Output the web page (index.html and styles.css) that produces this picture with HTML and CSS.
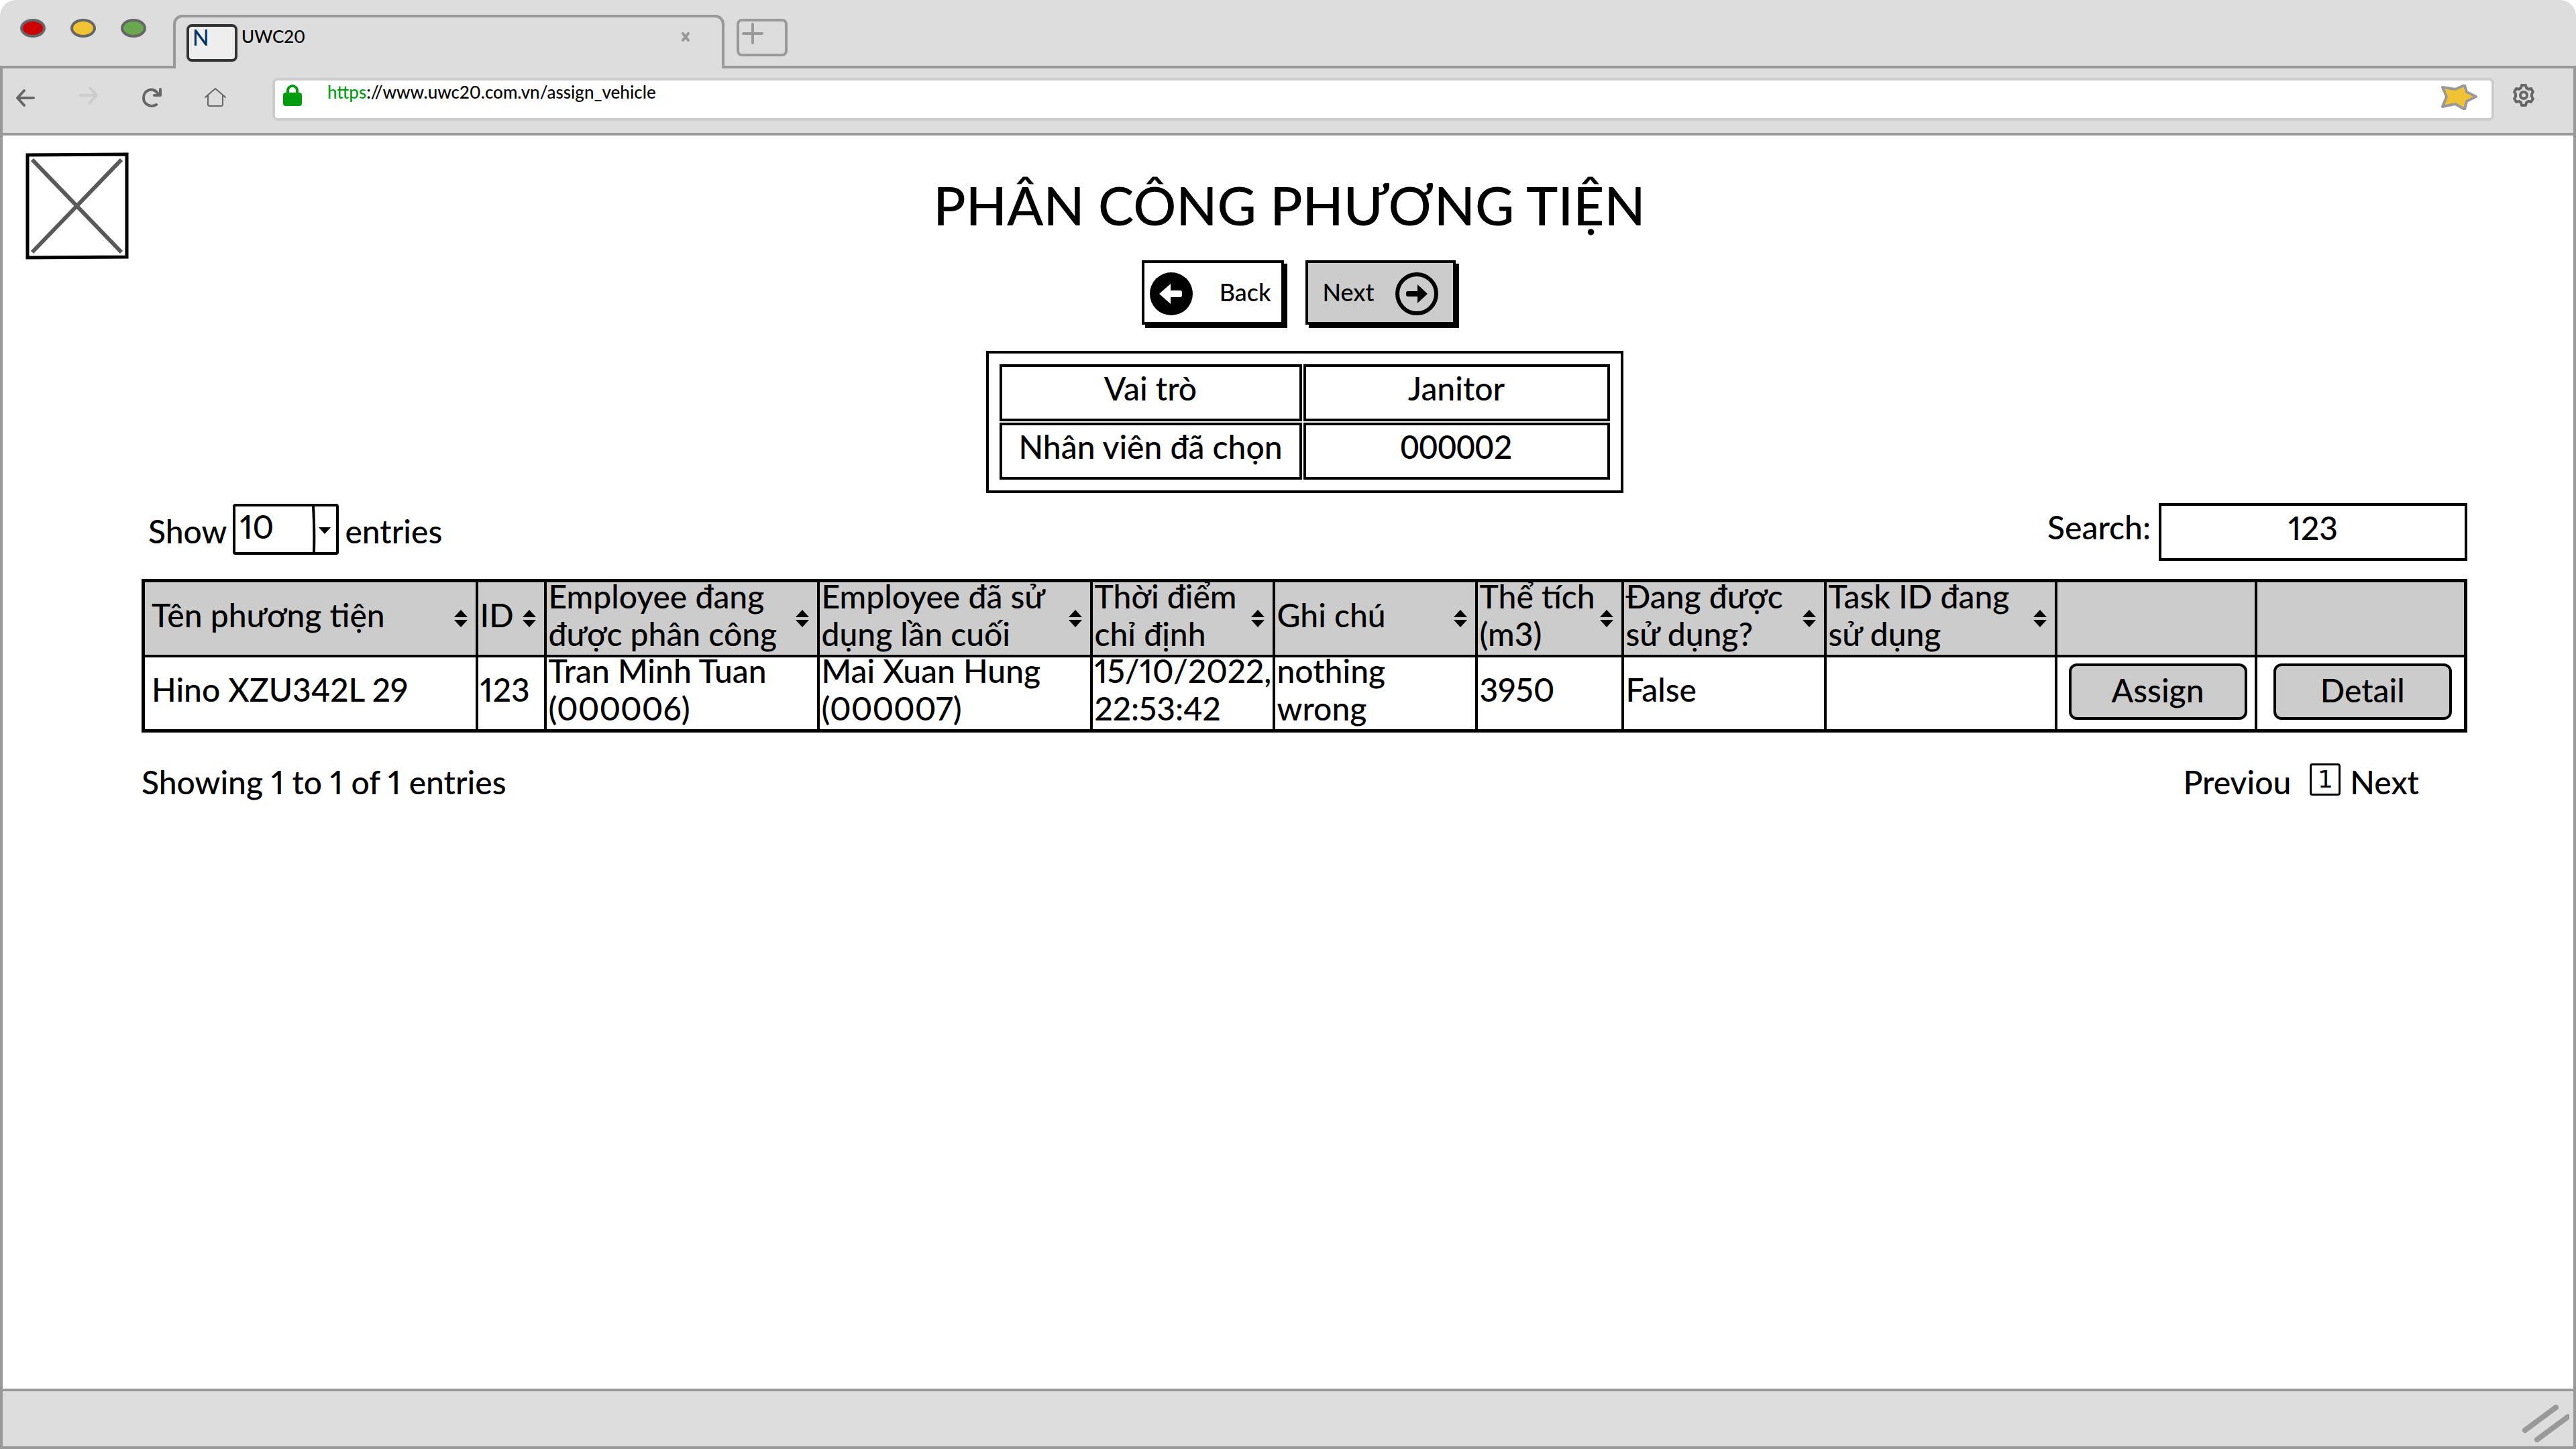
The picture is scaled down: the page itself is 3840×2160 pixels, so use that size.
FILE: index.html
```html
<!DOCTYPE html>
<html lang="vi">
<head>
<meta charset="utf-8">
<meta name="viewport" content="width=device-width, initial-scale=1">
<title>UWC20</title>
<link rel="stylesheet" href="styles.css">
</head>
<body>
<div class="browser">
  <header class="tabbar">
    <div class="lights">
      <span class="light light-close"></span>
      <span class="light light-min"></span>
      <span class="light light-max"></span>
    </div>
    <div class="tab">
      <span class="favicon">N</span>
      <span class="tab-title">UWC20</span>
      <button class="tab-close" type="button" aria-label="Close tab">
        <svg width="12" height="14" viewBox="0 0 12 14"><path d="M2 2L10 12M10 2L2 12"/></svg>
      </button>
    </div>
    <div class="tab-rest">
      <button class="new-tab" type="button" aria-label="New tab">
        <svg width="32" height="32" viewBox="0 0 32 32"><path d="M2 16H30M16 2V30"/></svg>
      </button>
    </div>
  </header>

  <nav class="toolbar">
    <button class="nav-btn" type="button" aria-label="Back"><svg width="32" height="32" viewBox="0 0 32 32"><path d="M28 18H4M14 7L4 18L14 29"/></svg></button>
    <button class="nav-btn nav-off" type="button" aria-label="Forward"><svg width="32" height="32" viewBox="0 0 32 32"><path d="M4 14H28M18 3L28 14L18 25"/></svg></button>
    <button class="nav-btn" type="button" aria-label="Reload"><svg width="32" height="32" viewBox="0 0 32 32"><path d="M23 28C14 33 4 27 4 18C4 7 17 0 26 12M29 5V14H20"/></svg></button>
    <button class="nav-btn nav-thin" type="button" aria-label="Home"><svg width="34" height="32" viewBox="0 0 34 32"><path d="M2 17L17 4L32 17M6 14V28Q6 30 9 30H25Q28 30 28 28V14"/></svg></button>
    <div class="urlbar">
      <svg class="lock" width="28" height="32" viewBox="0 0 28 32"><rect y="12" width="28" height="20" rx="4"/><path d="M7 15V9A7 7 0 0 1 21 9V15"/></svg>
      <label class="url-scheme" for="url">https</label>
      <input class="url-input" id="url" type="text" value="://www.uwc20.com.vn/assign_vehicle">
      <svg class="star" width="56" height="38" viewBox="0 2 56 38"><path d="M3 6L22 9L36 3L39 13L53 20L39 27L36 39L22 31L3 35L9 20Z"/></svg>
    </div>
    <button class="nav-btn nav-gear" type="button" aria-label="Settings"><svg width="32" height="34" viewBox="0 0 32 34"><path d="M13 2H19L20 6L23 8L27 7L30 12L28 15V19L30 22L27 27L23 26L20 28L19 32H13L12 28L9 26L5 27L2 22L4 19V15L2 12L5 7L9 8L12 6Z"/><circle cx="16" cy="17" r="5"/></svg></button>
  </nav>

  <main class="page">
    <div class="masthead">
      <svg class="logo" width="154" height="160" viewBox="0 0 154 160" role="img" aria-label="Logo"><path class="logo-cross" d="M10 11L143 149M143 11L10 149"/><path class="logo-frame" d="M3 4L151 3L151 156L3 157Z"/></svg>
      <h1 class="title">PHÂN CÔNG PHƯƠNG TIỆN</h1>
    </div>

    <section class="content">
      <div class="actions">
        <button class="step" type="button">
          <svg width="64" height="64" viewBox="0 0 64 64"><circle cx="32" cy="32" r="32"/><path class="arrow-light" d="M14 32L31 17V27H45Q48 27 48 30V34Q48 37 45 37H31V47Z"/></svg>
          <span>Back</span>
        </button>
        <button class="step step-next" type="button">
          <span>Next</span>
          <svg width="64" height="64" viewBox="0 0 64 64"><circle class="ring" cx="32" cy="32" r="29"/><path d="M48 32L33 18V28H19Q16 28 16 31V33Q16 36 19 36H33V46Z"/></svg>
        </button>
      </div>

      <table class="info">
        <tr><th scope="row">Vai trò</th><td>Janitor</td></tr>
        <tr><th scope="row">Nhân viên đã chọn</th><td>000002</td></tr>
      </table>

      <div class="controls">
        <div class="length">
          <label for="length">Show</label>
          <span class="select">
            <select id="length"><option>10</option></select>
            <svg width="36" height="68" viewBox="0 0 36 68"><path class="divider" d="M2 0Q4 34 3 68"/><path d="M10 31H28L19 41Z"/></svg>
          </span>
          <span>entries</span>
        </div>
        <div class="search">
          <label for="search">Search:</label>
          <input id="search" type="text" value="123">
        </div>
      </div>

      <table class="grid">
        <colgroup>
          <col class="c-name"><col class="c-id"><col class="c-emp"><col class="c-emp"><col class="c-time"><col class="c-note"><col class="c-vol"><col class="c-used"><col class="c-task"><col class="c-assign"><col>
        </colgroup>
        <thead>
          <tr>
            <th scope="col"><div class="head"><div class="cell">Tên phương tiện</div><svg class="sort" width="20" height="26" viewBox="0 0 20 26"><path d="M10 0L20 11H0ZM0 15H20L10 26Z"/></svg></div></th>
            <th scope="col"><div class="head"><div class="cell">ID</div><svg class="sort" width="20" height="26" viewBox="0 0 20 26"><path d="M10 0L20 11H0ZM0 15H20L10 26Z"/></svg></div></th>
            <th scope="col"><div class="head"><div class="cell">Employee đang<br>được phân công</div><svg class="sort" width="20" height="26" viewBox="0 0 20 26"><path d="M10 0L20 11H0ZM0 15H20L10 26Z"/></svg></div></th>
            <th scope="col"><div class="head"><div class="cell">Employee đã sử<br>dụng lần cuối</div><svg class="sort" width="20" height="26" viewBox="0 0 20 26"><path d="M10 0L20 11H0ZM0 15H20L10 26Z"/></svg></div></th>
            <th scope="col"><div class="head"><div class="cell">Thời điểm<br>chỉ định</div><svg class="sort" width="20" height="26" viewBox="0 0 20 26"><path d="M10 0L20 11H0ZM0 15H20L10 26Z"/></svg></div></th>
            <th scope="col"><div class="head"><div class="cell">Ghi chú</div><svg class="sort" width="20" height="26" viewBox="0 0 20 26"><path d="M10 0L20 11H0ZM0 15H20L10 26Z"/></svg></div></th>
            <th scope="col"><div class="head"><div class="cell">Thể tích<br>(m3)</div><svg class="sort" width="20" height="26" viewBox="0 0 20 26"><path d="M10 0L20 11H0ZM0 15H20L10 26Z"/></svg></div></th>
            <th scope="col"><div class="head"><div class="cell">Đang được<br>sử dụng?</div><svg class="sort" width="20" height="26" viewBox="0 0 20 26"><path d="M10 0L20 11H0ZM0 15H20L10 26Z"/></svg></div></th>
            <th scope="col"><div class="head"><div class="cell">Task ID đang<br>sử dụng</div><svg class="sort" width="20" height="26" viewBox="0 0 20 26"><path d="M10 0L20 11H0ZM0 15H20L10 26Z"/></svg></div></th>
            <th></th>
            <th></th>
          </tr>
        </thead>
        <tbody>
          <tr>
            <td><div class="cell">Hino XZU342L 29</div></td>
            <td><div class="cell">123</div></td>
            <td><div class="cell">Tran Minh Tuan<br>(000006)</div></td>
            <td><div class="cell">Mai Xuan Hung<br>(000007)</div></td>
            <td><div class="cell">15/10/2022,<br>22:53:42</div></td>
            <td><div class="cell">nothing<br>wrong</div></td>
            <td><div class="cell">3950</div></td>
            <td><div class="cell">False</div></td>
            <td></td>
            <td class="act"><button type="button">Assign</button></td>
            <td class="act"><button type="button">Detail</button></td>
          </tr>
        </tbody>
      </table>

      <div class="summary">
        <span>Showing 1 to 1 of 1 entries</span>
        <div class="pager">
          <a href="#prev">Previou</a>
          <a class="current" href="#1">1</a>
          <a href="#next">Next</a>
        </div>
      </div>
    </section>
  </main>

  <footer class="statusbar">
    <svg width="76" height="60" viewBox="0 0 76 60"><path d="M10 42L56 8M28 56L74 22"/></svg>
  </footer>
</div>
</body>
</html>
```
FILE: styles.css
```css
* { box-sizing: border-box; }

body {
  margin: 0;
  background: #fff;
  color: #000;
  font: 500 48px/56px Lato, "Noto Sans", sans-serif;
  font-variant-numeric: proportional-nums;
}

button, input, select {
  font: inherit;
  font-variant-numeric: inherit;
  color: inherit;
}
button { padding: 0; }
a { color: inherit; text-decoration: none; }
svg { display: block; flex: none; }

.browser {
  display: flex;
  flex-direction: column;
  min-height: 100vh;
}

/* Tab strip */
.tabbar {
  display: flex;
  height: 102px;
  background: #ddd;
  border-radius: 24px 24px 0 0;
}
.lights {
  display: flex;
  align-items: flex-start;
  gap: 37px;
  width: 258px;
  padding: 28px 0 0 30px;
  border-bottom: 4px solid #999;
}
.light {
  width: 38px;
  height: 28px;
  border: 4px solid #666;
  border-radius: 50%;
}
.light-close { background: #c00; }
.light-min { background: #f1c232; }
.light-max { background: #6aa84f; }
.tab {
  display: flex;
  align-items: flex-start;
  width: 822px;
  margin-top: 22px;
  padding: 10px 48px 0 16px;
  border: 4px solid #999;
  border-bottom: 0;
  border-radius: 14px 14px 0 0;
}
.favicon {
  width: 76px;
  height: 56px;
  padding-left: 5px;
  border: 4px solid #333;
  border-radius: 8px;
  background: #eee;
  color: #036;
  font-size: 32px;
  line-height: 32px;
}
.tab-title {
  flex: 1;
  margin-left: 6px;
  font-size: 26px;
  line-height: 36px;
}
.tab-close {
  margin-top: 12px;
  border: 0;
  background: none;
}
.tab-close path, .new-tab path {
  fill: none;
  stroke: #999;
  stroke-width: 4;
  stroke-linecap: round;
}
.tab-rest {
  flex: 1;
  padding: 28px 0 0 18px;
  border-bottom: 4px solid #999;
}
.new-tab {
  display: block;
  width: 76px;
  height: 56px;
  padding: 0 0 12px 4px;
  border: 4px solid #999;
  border-radius: 8px;
  background: none;
}

/* Address row */
.toolbar {
  display: flex;
  align-items: flex-start;
  height: 100px;
  padding: 14px 58px 0 18px;
  background: #ddd;
  border: solid #999;
  border-width: 0 4px 4px;
}
.nav-btn {
  width: 94px;
  padding-top: 12px;
  border: 0;
  background: none;
}
.nav-btn path, .nav-btn circle {
  fill: none;
  stroke: #666;
  stroke-width: 4;
  stroke-linecap: round;
  stroke-linejoin: round;
}
.nav-off path { stroke: #ccc; }
.nav-thin { width: 102px; }
.nav-thin path { stroke-width: 2; }
.nav-gear {
  width: 32px;
  margin-left: 28px;
  padding-top: 9px;
}
.urlbar {
  display: flex;
  flex: 1;
  align-items: flex-start;
  height: 64px;
  padding: 0 20px 0 12px;
  border: 4px solid #ccc;
  border-radius: 8px;
  background: #fff;
  font-size: 26px;
  line-height: 34px;
}
.urlbar svg { margin-top: 6px; }
.lock { fill: #009e0f; }
.lock path {
  fill: none;
  stroke: #009e0f;
  stroke-width: 4;
}
.url-scheme {
  margin-left: 38px;
  color: #009e0f;
}
.url-input {
  flex: 1;
  height: 34px;
  padding: 0;
  border: 0;
  background: none;
}
.star path {
  fill: #f1c232;
  stroke: #999;
  stroke-width: 4;
  stroke-linejoin: round;
}

/* Page */
.page {
  flex: 1;
  border: solid #999;
  border-width: 0 4px;
}
.masthead {
  display: grid;
  grid-template-columns: 154px 1fr 154px;
  padding: 25px 30px 0 34px;
}
.logo path { fill: none; }
.logo-frame {
  stroke: #000;
  stroke-width: 5;
}
.logo-cross {
  stroke: #595959;
  stroke-width: 6;
}
.title {
  margin: 30px 0 0;
  font-size: 80px;
  font-weight: 500;
  line-height: 96px;
  text-align: center;
}
.content { padding: 1px 158px 0 207px; }

.actions {
  display: flex;
  justify-content: center;
  gap: 32px;
  padding-right: 18px;
}
.step {
  display: flex;
  align-items: center;
  justify-content: space-between;
  width: 212px;
  height: 96px;
  padding: 0 15px 0 8px;
  border: 4px solid #000;
  box-shadow: 5px 5px 0 #000;
  background: #fff;
  font-size: 36px;
  line-height: 44px;
}
.step-next {
  width: 224px;
  padding: 0 22px;
  background: #ccc;
}
.step svg { margin-top: 4px; }
.step span { padding-bottom: 2px; }
.arrow-light { fill: #fff; }
.ring {
  fill: none;
  stroke: #000;
  stroke-width: 6;
}

.info {
  width: 950px;
  height: 212px;
  margin: 39px auto 0;
  padding: 14px;
  border: 4px solid #000;
  border-spacing: 2px;
  table-layout: fixed;
  font-variant-numeric: tabular-nums;
}
.info th, .info td {
  padding: 0 0 14px;
  border: 4px solid #000;
  font-weight: 500;
  text-align: center;
  white-space: nowrap;
}
.info th { width: 451px; }

.controls {
  display: flex;
  justify-content: space-between;
  margin-top: 15px;
}
.length {
  display: flex;
  align-items: flex-start;
  gap: 9px;
  padding: 1px 0 0 10px;
}
.length label, .length > span:last-child { padding-top: 13px; }
.select {
  display: grid;
  grid-template-columns: 1fr 36px;
  width: 158px;
  height: 76px;
  border: 4px solid #000;
  border-radius: 4px;
}
.select select {
  grid-area: 1 / 1 / 2 / 3;
  padding: 0 0 8px 6px;
  border: 0;
  appearance: none;
  background: none;
}
.select svg {
  grid-area: 1 / 2;
  pointer-events: none;
}
.divider {
  fill: none;
  stroke: #000;
  stroke-width: 4;
}
.search {
  display: flex;
  gap: 12px;
}
.search label { padding-top: 8px; }
.search input {
  width: 460px;
  height: 86px;
  padding: 0 0 14px;
  border: 4px solid #000;
  background: #fff;
  text-align: center;
}

.grid {
  width: 100%;
  margin-top: 27px;
  border: 5px solid #000;
  border-collapse: collapse;
  table-layout: fixed;
}
.c-name { width: 497px; }
.c-id { width: 102px; }
.c-emp { width: 407px; }
.c-time { width: 272px; }
.c-note { width: 302px; }
.c-vol { width: 218px; }
.c-used { width: 302px; }
.c-task { width: 344px; }
.c-assign { width: 298px; }
.grid th, .grid td {
  height: 112px;
  padding: 0 0 0 3px;
  border: 4px solid #000;
  font-weight: 500;
  text-align: left;
  white-space: nowrap;
}
.grid th { background: #ccc; }
.grid th:first-child, .grid td:first-child { padding-left: 10px; }
.cell { margin-top: -10px; }
.head {
  display: flex;
  align-items: center;
  justify-content: space-between;
  padding-right: 12px;
}
.grid .act { padding: 0 0 0 6px; }
.act button {
  display: block;
  width: 266px;
  height: 84px;
  margin: 0 auto 4px;
  padding-bottom: 4px;
  border: 4px solid #000;
  border-radius: 12px;
  background: #ccc;
}

.summary {
  display: flex;
  justify-content: space-between;
  padding: 46px 72px 0 0;
}
.pager {
  display: flex;
  gap: 14px;
}
.current {
  width: 46px;
  height: 48px;
  margin-left: 14px;
  border: 3px solid #000;
  border-radius: 4px;
  font: 36px/42px "DejaVu Sans", sans-serif;
  text-align: center;
}

.statusbar {
  display: flex;
  justify-content: flex-end;
  height: 90px;
  padding: 16px 6px 0;
  border: 4px solid #999;
  background: #ddd;
}
.statusbar path {
  fill: none;
  stroke: #999;
  stroke-width: 8;
  stroke-linecap: round;
}
```
